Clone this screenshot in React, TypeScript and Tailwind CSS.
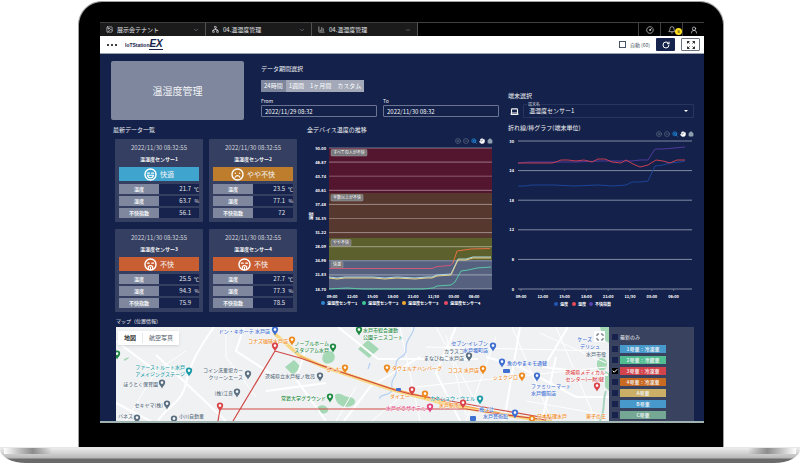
import React from 'react';
import {
  Bell,
  ChartColumn,
  Check,
  ChevronDown,
  CircleGauge,
  CircleMinus,
  CirclePlus,
  Hand,
  House,
  Image,
  Laptop,
  Maximize,
  Network,
  RotateCw,
  UserRound,
  ZoomIn,
} from 'lucide-react';

const TABS = [
  { label: '展示会テナント', Icon: Image },
  { label: '04.温湿度管理', Icon: Network },
  { label: '04.温湿度管理', Icon: ChartColumn },
];

type Mood = 'good' | 'fair' | 'bad';

interface Sensor {
  name: string;
  time: string;
  mood: Mood;
  temp: string;
  humidity: string;
  index: string;
}

const SENSORS: Sensor[] = [
  { name: '温湿度センサー1', time: '2022/11/30 08:32:55', mood: 'good', temp: '21.7', humidity: '63.7', index: '56.1' },
  { name: '温湿度センサー2', time: '2022/11/30 08:32:55', mood: 'fair', temp: '23.5', humidity: '77.1', index: '72' },
  { name: '温湿度センサー3', time: '2022/11/30 08:32:55', mood: 'bad', temp: '25.5', humidity: '94.3', index: '75.9' },
  { name: '温湿度センサー4', time: '2022/11/30 08:32:55', mood: 'bad', temp: '27.7', humidity: '77.3', index: '78.5' },
];

const MOODS = {
  good: { label: '快適', bg: 'bg-[#3fa5cf]' },
  fair: { label: 'やや不快', bg: 'bg-[#bd7d2c]' },
  bad: { label: '不快', bg: 'bg-[#c95e33]' },
};

const HOURS = ['09:00', '12:00', '15:00', '18:00', '21:00', '11/30', '03:00', '06:00'];

function Face({ mood }: { mood: Mood }) {
  return (
    <svg viewBox="0 0 24 24" className="w-[13px] h-[13px] shrink-0" fill="none" stroke="white" strokeWidth="2.6" strokeLinecap="round">
      <circle cx="12" cy="12" r="10.2" />
      {mood === 'good' && (
        <>
          <path d="M6.5 9.5h3.5M14 9.5h3.5" />
          <path d="M6.5 13.5h11c-.6 3-2.8 4.5-5.5 4.5s-4.9-1.5-5.5-4.5z" strokeWidth="2" />
        </>
      )}
      {mood === 'fair' && (
        <>
          <path d="M8 9.5v.3M16 9.5v.3" />
          <path d="M7.5 17c1.2-2 2.7-3 4.5-3s3.3 1 4.5 3" strokeWidth="2" />
        </>
      )}
      {mood === 'bad' && (
        <>
          <path d="M6.500 9.500h3M14.500 9.500h3" />
          <path d="M8 20v-4c2.300-2.500 5.700-2.500 8 0v4" strokeWidth="2.200" />
          <path d="M12 17v4" strokeWidth="2" />
        </>
      )}
    </svg>
  );
}

function TopTabs() {
  return (
    <nav className="flex h-3.5 bg-black text-[6px] leading-[8px] text-gray-200 border-t border-neutral-700">
      {TABS.map(({ label, Icon }, i) => (
        <button key={i} type="button" className="w-[106px] flex items-center gap-1 px-1.5 bg-[#1b1b1c] border-r border-neutral-600">
          <Icon className="w-[7px] h-[7px]" />
          <span>{label}</span>
          <ChevronDown className="w-[6px] h-[6px] ml-auto text-gray-400" />
        </button>
      ))}
      <div className="ml-auto flex">
        <button type="button" aria-label="status" className="w-[22px] flex items-center justify-center border-l border-neutral-700">
          <CircleGauge className="w-2 h-2" />
        </button>
        <button type="button" aria-label="notifications" className="relative w-[22px] flex items-center justify-center border-l border-neutral-700">
          <Bell className="w-2 h-2" />
          <span className="absolute right-0 bottom-px w-[7px] h-[7px] rounded-full bg-yellow-300 text-[4px] leading-[7px] text-black text-center">6</span>
        </button>
        <button type="button" aria-label="account" className="w-[22px] flex items-center justify-center border-l border-neutral-700">
          <UserRound className="w-2 h-2" />
        </button>
      </div>
    </nav>
  );
}

function Header() {
  return (
    <header className="flex items-center h-[18px] pl-[7px] pr-1 bg-white border-b border-gray-400 text-[#17224b]">
      <button type="button" aria-label="menu" className="flex gap-[2px]">
        <span className="w-[2px] h-[2px] rounded-full bg-black" />
        <span className="w-[2px] h-[2px] rounded-full bg-black" />
        <span className="w-[2px] h-[2px] rounded-full bg-black" />
      </button>
      <a href="#" className="ml-2 flex items-center font-['Liberation_Sans',sans-serif]">
        <span className="text-[5px] leading-[8px] font-bold">IoTStation</span>
        <span className="text-[10px] leading-[10px] font-black italic border-b border-[#17224b]">EX</span>
      </a>
      <label className="ml-auto flex items-center gap-1 text-[5px] leading-[8px] text-gray-600">
        <input type="checkbox" className="appearance-none w-[7px] h-[7px] border border-gray-600" />
        自動 (60)
      </label>
      <button type="button" aria-label="refresh" className="ml-1.5 w-[19px] h-[13px] rounded-[1px] bg-[#17244d] text-white flex items-center justify-center">
        <RotateCw className="w-2 h-2" strokeWidth={3} />
      </button>
      <button type="button" aria-label="fullscreen" className="ml-1.5 w-[19px] h-[13px] rounded-[1px] border border-gray-500 text-black flex items-center justify-center">
        <svg viewBox="0 0 16 16" className="w-2 h-2" fill="none" stroke="currentColor" strokeWidth="1.6">
          <path d="M1 5V1h4M1 1l4 4M11 1h4v4M15 1l-4 4M1 11v4h4M1 15l4-4M15 11v4h-4M15 15l-4-4" />
        </svg>
      </button>
    </header>
  );
}

function Range() {
  return (
    <section className="flex-1 flex flex-col pt-1">
      <h2 className="text-[6px] leading-[8px]">データ期間選択</h2>
      <div className="mt-[7px] flex self-start h-3 bg-[#a3a9b8] text-[6px] leading-[8px] text-white">
        <button type="button" className="px-[3px] bg-[#7d869c]">24時間</button>
        <button type="button" className="px-[3px]">1週間</button>
        <button type="button" className="px-[3px]">1ヶ月間</button>
        <button type="button" className="px-[3px]">カスタム</button>
      </div>
      <div className="mt-[5px] grid grid-cols-2 gap-1.5 text-[6px]">
        <label className="flex flex-col text-[5px] leading-[8px]">
          From
          <input type="text" defaultValue="2022/11/29 08:32" className="w-full h-3 px-[3px] border border-[#6b7490] rounded-[1px] text-[6px]" />
        </label>
        <label className="flex flex-col text-[5px] leading-[8px]">
          To
          <input type="text" defaultValue="2022/11/30 08:32" className="w-full h-3 px-[3px] border border-[#6b7490] rounded-[1px] text-[6px]" />
        </label>
      </div>
    </section>
  );
}

function SensorCard({ sensor }: { sensor: Sensor }) {
  const mood = MOODS[sensor.mood];
  const rows = [
    ['温度', sensor.temp, '℃'],
    ['湿度', sensor.humidity, '%'],
    ['不快指数', sensor.index, ''],
  ];
  return (
    <article className="bg-[#353f61] rounded-[1px] px-1 pt-[5px] pb-[2px] text-[6px] leading-[8px]">
      <p className="text-center text-gray-300">{sensor.time}</p>
      <h3 className="mt-[3px] text-center text-[5px] leading-[8px] font-bold">{sensor.name}</h3>
      <div className={`mt-1 h-3.5 flex items-center justify-center gap-[3px] text-[7px] ${mood.bg}`}>
        <Face mood={sensor.mood} />
        {mood.label}
      </div>
      <table className="w-full mt-px table-fixed border-separate border-spacing-x-0 border-spacing-y-[2px] text-[5px] leading-[10px]">
        <tbody>
          {rows.map(([label, value, unit]) => (
            <tr key={label}>
              <th className="p-0 w-1/2 bg-[#7e879d] font-bold">{label}</th>
              <td className="p-0 bg-[#17234c] text-right text-[6px] text-gray-200">{value}</td>
              <td className="p-0 w-2 bg-[#17234c] text-right text-gray-200">{unit}</td>
            </tr>
          ))}
        </tbody>
      </table>
    </article>
  );
}

function ChartTools({ className = '' }: { className?: string }) {
  return (
    <div className={`flex justify-end items-center gap-[2px] h-2 ${className}`}>
      <button type="button" aria-label="zoom in"><CirclePlus className="w-[6px] h-[6px] text-[#6e8192]" /></button>
      <button type="button" aria-label="zoom out"><CircleMinus className="w-[6px] h-[6px] text-[#6e8192]" /></button>
      <button type="button" aria-label="select"><ZoomIn className="w-[6px] h-[6px] text-[#1f8fe0]" strokeWidth={3} /></button>
      <button type="button" aria-label="pan"><Hand className="w-[6px] h-[6px] text-white fill-white" strokeWidth={2} /></button>
      <button type="button" aria-label="reset"><House className="w-[6px] h-[6px] text-[#8ea0b0] fill-[#8ea0b0]" strokeWidth={1} /></button>
    </div>
  );
}

const BANDS = [
  { y: 14, h: 45, fill: '#54152f', label: 'すべての人が不快', w: 36 },
  { y: 59, h: 45, fill: '#57382f', label: '半数以上が不快', w: 32 },
  { y: 104, h: 22, fill: '#5c602d', label: 'やや不快', w: 20 },
  { y: 126, h: 29, fill: '#55617f', label: '快適', w: 12 },
];

const LEVELS = ['50.00', '46.87', '43.74', '40.61', '37.48', '34.35', '31.22', '28.09', '24.96', '21.83', '18.70'];

function AllDevicesChart() {
  const legend = [
    [20, '#2f86d1', '温湿度センサー1'],
    [61, '#3fc795', '温湿度センサー2'],
    [101, '#f0a92e', '温湿度センサー3'],
    [143, '#e94b62', '温湿度センサー4'],
  ] as const;
  return (
    <svg viewBox="0 11 196 167" className="w-full block" fontSize="4" fill="white">
      {BANDS.map((b) => (
        <rect key={b.label} x="26" y={b.y} width="163" height={b.h} fill={b.fill} />
      ))}
      {LEVELS.map((v, i) => (
        <g key={v}>
          <line x1="26" x2="189" y1={14 + i * 14.1} y2={14 + i * 14.1} stroke="white" strokeOpacity={i % 3 === 2 ? 0.3 : 0.42} strokeWidth="1" />
          <text x="23" y={15.5 + i * 14.1} textAnchor="end" fontWeight="600">{v}</text>
        </g>
      ))}
      {BANDS.map((b) => (
        <g key={b.label}>
          <rect x="28" y={b.y + 1.5} width={b.w} height="6.5" rx="1" fill="#77777b" stroke="#b5b5b5" strokeWidth=".4" />
          <text x={28 + b.w / 2} y={b.y + 6.3} textAnchor="middle">{b.label}</text>
        </g>
      ))}
      <text x="8" y="84" textAnchor="middle" fontWeight="700" transform="rotate(-90 8 82)">温度</text>
      <g fill="none" strokeWidth="1" strokeLinejoin="round">
        <polyline stroke="#d0587a" points="26,134.5 50,134.5 80,134.5 129,134.5 134,132.5 147,131.5 150,129" />
        <polyline stroke="#e3703f" points="150,129 154,117 161,116 168,115 187,114.5" />
        <polyline stroke="#a9d8f0" points="26,143 34,144 42,143 70,143 82,144 94,143 112,144 124,143 129,143 134,141 148,140 155,125 163,125 170,123 188,123" />
        <polyline stroke="#e5cf82" points="26,144 34,145 42,144 70,144 82,145 94,144 112,145 124,144 129,144 134,142 148,141 155,126 163,126 170,124 188,124" />
        <polyline stroke="#58c9a6" points="26,155 44,154 60,155 120,155 130,154 134,152 148,151 152,148 158,137 165,136 174,134 188,133" />
      </g>
      {HOURS.map((h, i) => (
        <text key={h} x={29 + i * 20.3} y="163.5" textAnchor="middle" fontWeight="600">{h}</text>
      ))}
      {legend.map(([x, color, label]) => (
        <g key={label}>
          <circle cx={x} cy="169" r="2" fill={color} />
          <text x={x + 4} y="170.5" fontWeight="600">{label}</text>
        </g>
      ))}
    </svg>
  );
}

function DeviceChart() {
  const legend = [
    [48, '#2157b5', '温度'],
    [66, '#ea4a52', '湿度'],
    [83, '#5a3fae', '不快指数'],
  ] as const;
  return (
    <svg viewBox="0 6 186 174" className="w-full block" fontSize="4" fill="white">
      {['30', '24', '18', '12', '6', '0'].map((v, i) => (
        <g key={v}>
          <line x1="10" x2="184" y1={9 + i * 29.6} y2={9 + i * 29.6} stroke="#808aa3" strokeWidth="1" />
          <text x="6" y={10.5 + i * 29.6} textAnchor="end" fontWeight="600">{v}</text>
        </g>
      ))}
      <g fill="none" strokeWidth="1" strokeLinejoin="round">
        <polyline stroke="#1c4596" points="10,54 17,54 24,53 46,53 66,54 90,53 105,54 118,53 124,50 132,50 140,49 147,34 155,33 162,31 172,30 177,29" />
        <polyline stroke="#51399c" points="10,31 20,30 50,30 67,30 92,29 124,29 132,28 140,28 147,17 155,17 166,16 177,15" />
        <polyline stroke="#c83f55" points="10,31 34,31 44,31 48,30 53,28 60,28 68,29 76,28 84,30 90,27 97,27 104,30 113,31 118,28 125,32 132,35 140,33 148,28 155,29 162,31 169,28 177,28" />
      </g>
      {HOURS.map((h, i) => (
        <g key={h}>
          <line x1={13 + i * 21.8} x2={13 + i * 21.8} y1="157" y2="159" stroke="#808aa3" strokeWidth=".6" />
          <text x={13 + i * 21.8} y="166" textAnchor="middle" fontWeight="600">{h}</text>
        </g>
      ))}
      {legend.map(([x, color, label]) => (
        <g key={label}>
          <circle cx={x} cy="172" r="2" fill={color} />
          <text x={x + 4} y="173.5" fontWeight="600">{label}</text>
        </g>
      ))}
    </svg>
  );
}

const BLUE = '#3f6fd0';
const ORANGE = '#ee8a1d';
const GREEN = '#1f8a44';
const TEAL = '#1a9aa5';
const SLATE = '#5b6f80';
const PINK = '#e0457e';
const RED = '#d9454a';

// x, y of the pin head
const PINS: [number, number, string][] = [
  [159, 3, BLUE], [176, 13, ORANGE], [159, 19, RED], [217, 20, GREEN], [243, 3, GREEN],
  [73, 44, TEAL], [46, 56, SLATE], [51, 77, SLATE], [21, 91, SLATE], [58, 92, SLATE],
  [132, 47, SLATE], [121, 65, SLATE], [104, 79, RED], [204, 49, SLATE], [229, 41, ORANGE],
  [271, 41, ORANGE], [214, 70, GREEN], [296, 63, RED], [309, 67, ORANGE], [314, 80, PINK],
  [353, 29, SLATE], [377, 19, BLUE], [367, 42, ORANGE], [364, 72, TEAL], [347, 76, RED],
  [386, 35, BLUE], [406, 49, ORANGE], [421, 49, BLUE], [481, 59, RED], [399, 86, BLUE],
  [416, 92, ORANGE], [1, 27, GREEN],
];

// x, baseline, text, colour, anchor
const PLACES: [number, number, string, string, 'start' | 'end'][] = [
  [154, 6, 'ドン・キホーテ 水戸店', BLUE, 'end'],
  [172, 16, 'コナズ珈琲水戸店', ORANGE, 'end'],
  [213, 18, 'ノーブルホーム', GREEN, 'end'],
  [213, 25, 'スタジアム水戸', GREEN, 'end'],
  [247, 5, '水戸市総合運動', GREEN, 'start'],
  [247, 12, '公園テニスコート', GREEN, 'start'],
  [69, 42, 'ファーストルート水戸', TEAL, 'end'],
  [69, 49, 'アメイジングステージ', TEAL, 'end'],
  [42, 59, 'ほうとく保育園', SLATE, 'end'],
  [47, 80, 'セキヤマ(株)', SLATE, 'end'],
  [17, 91, 'バネス', SLATE, 'end'],
  [63, 91, '小川自動車', SLATE, 'start'],
  [127, 45, 'コイン洗車場カー', SLATE, 'end'],
  [127, 52, 'クリーンエース', SLATE, 'end'],
  [117, 68, '(株)江良', SLATE, 'end'],
  [199, 51, '茨城県立水戸桜ノ牧高', SLATE, 'end'],
  [210, 73, '常磐大学グラウンド', GREEN, 'end'],
  [225, 44, 'らーむ', ORANGE, 'end'],
  [276, 43, 'タヴェルナハンバーグ', ORANGE, 'start'],
  [294, 71, 'ダイエー', ORANGE, 'end'],
  [310, 83, '水戸プラザホテル', PINK, 'end'],
  [348, 26, 'カラスコ', SLATE, 'end'],
  [348, 33, 'まなびねこ水戸店', SLATE, 'end'],
  [372, 18, 'セブン-イレブン', BLUE, 'end'],
  [372, 25, '水戸堀町店', BLUE, 'end'],
  [363, 45, 'ココス 水戸店', ORANGE, 'end'],
  [359, 73, 'カネショウ・ウェル', TEAL, 'end'],
  [343, 80, '水戸駅南', ORANGE, 'end'],
  [363, 84, '梅ノ辻', BLUE, 'start'],
  [367, 91, '水戸芸術館', BLUE, 'start'],
  [391, 38, '魚のやまキモ通健', BLUE, 'start'],
  [402, 52, 'シェクジロ', ORANGE, 'end'],
  [415, 61, 'ファミリーマート', BLUE, 'start'],
  [415, 68, '水戸備前店', BLUE, 'start'],
  [489, 47, '茨城県メディカル', RED, 'end'],
  [488, 54, 'センター(一財)健', RED, 'end'],
  [476, 14, 'ケーズ', BLUE, 'end'],
  [484, 21, 'デリシュ', BLUE, 'end'],
  [490, 29, '水戸市役', SLATE, 'end'],
  [490, 91, '菓子の王', ORANGE, 'end'],
  [421, 91, '日本料理水戸', ORANGE, 'start'],
];

function MapView() {
  return (
    <div className="relative flex-1 min-w-0 overflow-hidden bg-[#eff1f3]">
      <svg viewBox="0 0 493 94" preserveAspectRatio="xMidYMid slice" className="w-full h-[94px] block" fontSize="5">
        <g fill="#a5d8b5">
          <path d="M169 40l9-7 7 7-8 8zM242 22l10-9 11 9-10 9z" />
          <path d="M212 24c6 0 8 5 6 9s-9 5-11 1 1-10 5-10zM200 82c4-6 10-4 12 0s-8 8-12 0zM219 68c5-4 9 2 14 2s10 6 2 9-16-2-16-11z" />
          <path d="M484 0h9v16l-6-4zM485 31c6 0 7 6 5 10s-9 3-9-3 2-7 4-7zM489 44l4 2v18l-4-4z" />
          <path d="M8 32l5-2-1 2-4 2z" />
        </g>
        <path d="M0 76L42 98M98 0C84 20 74 36 70 56S50 80 42 94M40 28l70 66M128 0l-8 24 40 26M228 94l26-34 50-30M222 0l40 32h90M340 0l-20 46 24 48M404 0l-16 94M440 30l-14 64M452 0l-24 40 64 8M300 32h62M370 30l34 10 56 30h34M190 22l-10 30 30 42M150 64l60-8M0 14l40 30" fill="none" stroke="#fff" strokeWidth="2" />
        <path d="M10 94l30-50 30-20M110 0v30l30 40M284 0l20 94M320 0l50 94M396 0l40 94M440 0l40 94M300 60l190-20M310 20l180 4M330 8l20 80M380 10l-30 84M410 74l80 14M424 6l66 30M240 60l-20 34M256 94l40-34" fill="none" stroke="#fff" strokeWidth="1" />
        <path d="M298 0c0 8-9 12-8 22s-12 6-10 18-6 10-4 20-14 6-12 12M254 36l-2 6" fill="none" stroke="#b5d0f4" strokeWidth="1.2" />
        <path d="M490 64c-4 10 0 18-6 30" fill="none" stroke="#a8d4bf" strokeWidth="2" />
        <path d="M158 6l26 23 22 10 68 23 60 16 50 9 52 8" fill="none" stroke="#f9d783" strokeWidth="3.5" />
        <path d="M184 29l22 10 68 22 60 15 50 10" fill="none" stroke="#f0a04e" strokeWidth="1" />
        <path d="M159 24l25 7 35 12 60 20 15 4 40 7 50 9 52 9M159 24l-42 70M102 94l2-12h246l34 5 46 6" fill="none" stroke="#cf4a46" strokeWidth="1.2" />
        {PLACES.map(([x, y, label, color, anchor]) => (
          <text key={label} x={x} y={y} fill={color} textAnchor={anchor} fontWeight="500" stroke="#fff" strokeWidth=".6" paintOrder="stroke">{label}</text>
        ))}
        {PINS.map(([x, y, color]) => (
          <g key={`${x}-${y}`} transform={`translate(${x} ${y})`}>
            <path d="M0 5.5C-1 3-3.2 2-3.2-.4a3.2 3.2 0 0 1 6.4 0C3.2 2 1 3 0 5.5z" fill={color} />
            <circle r="1.3" cy="-.4" fill="#fff" />
          </g>
        ))}
        <g fill={BLUE}>
          <rect x="280" y="61" width="5" height="3" rx="1" />
          <rect x="387" y="42" width="7" height="4" rx="1" />
          <rect x="354" y="89" width="6" height="5" rx="1" />
        </g>
      </svg>
      <div className="absolute left-[2px] top-1 flex h-3.5 bg-white text-[6px] leading-[8px] shadow-sm">
        <button type="button" className="px-1.5 font-medium text-black">地図</button>
        <button type="button" className="my-[2px] pl-1.5 pr-1.5 border-l border-gray-200 text-gray-600">航空写真</button>
      </div>
      <button type="button" aria-label="expand map" className="absolute right-1 top-1 w-[11px] h-[11px] bg-white text-gray-600 flex items-center justify-center">
        <Maximize className="w-2 h-2" strokeWidth={3} />
      </button>
    </div>
  );
}

const VEHICLES = [
  { label: '1号車：冷凍車', bg: 'bg-[#4799cb]' },
  { label: '2号車：冷蔵車', bg: 'bg-[#51bd91]' },
  { label: '3号車：冷凍車', bg: 'bg-[#d4434b]', checked: true },
  { label: '4号車：冷凍車', bg: 'bg-[#c86a22]' },
  { label: 'A号車', bg: 'bg-[#c9b066]' },
  { label: 'B号車', bg: 'bg-[#4799cb]' },
  { label: 'C号車', bg: 'bg-[#74a894]' },
];

function VehicleCheck({ checked = false }: { checked?: boolean }) {
  return (
    <span className="grid">
      <input type="checkbox" defaultChecked={checked} className="peer appearance-none col-start-1 row-start-1 w-1.5 h-1.5 bg-[#17234c] checked:bg-black" />
      <Check className="hidden peer-checked:block pointer-events-none col-start-1 row-start-1 w-1.5 h-1.5 text-white" strokeWidth={4} />
    </span>
  );
}

function VehicleList() {
  return (
    <aside className="w-[85px] h-[94px] shrink-0 overflow-hidden bg-[#39425f] pl-[3px] pt-1.5 flex flex-col gap-[3px] text-[5px] leading-[8px]">
      <label className="flex items-center gap-[2px] mb-px">
        <VehicleCheck />
        最新のみ
      </label>
      {VEHICLES.map((v) => (
        <label key={v.label} className="flex items-center gap-[2px]">
          <VehicleCheck checked={v.checked} />
          <span className={`w-[46px] h-2 text-center font-medium ${v.bg}`}>{v.label}</span>
        </label>
      ))}
    </aside>
  );
}

function Dashboard() {
  return (
    <main className="bg-[#14214a] text-gray-100 pl-[11px] pr-2.5 pt-[7px]">
      <div className="grid grid-cols-[388fr_186fr] gap-[9px]">
        <div className="min-w-0">
          <div className="flex gap-[17px]">
            <h1 className="w-[133px] h-[59px] rounded-[2px] bg-[#7e879d] flex items-center justify-center text-[10px]">温湿度管理</h1>
            <Range />
          </div>
          <div className="mt-1.5 grid grid-cols-[186fr_196fr] gap-1.5">
            <section className="min-w-0">
              <h2 className="pl-[2px] text-[6px] leading-[8px]">最新データ一覧</h2>
              <div className="mt-[5px] ml-1 grid grid-cols-2 gap-x-1.5 gap-y-[7px]">
                {SENSORS.map((s) => (
                  <SensorCard key={s.name} sensor={s} />
                ))}
              </div>
            </section>
            <section className="min-w-0">
              <h2 className="pl-1 text-[6px] leading-[8px]">全デバイス温度の推移</h2>
              <ChartTools className="mt-[3px] pr-1.5" />
              <AllDevicesChart />
            </section>
          </div>
        </div>
        <div className="min-w-0 pt-[31px]">
          <h2 className="text-[6px] leading-[8px]">端末選択</h2>
          <div className="mt-1 flex items-center gap-1">
            <Laptop className="w-[9px] h-[9px] ml-[2px]" strokeWidth={3} />
            <div className="relative flex-1">
              <label htmlFor="device" className="absolute left-1 -top-1 px-px bg-[#14214a] text-[4px] leading-[8px] text-gray-300">端末名</label>
              <select id="device" className="appearance-none block w-full h-3.5 pl-[5px] text-[6px] leading-[8px] border border-[#28365f] rounded-[1px]">
                <option>温湿度センサー1</option>
                <option>温湿度センサー2</option>
              </select>
              <span className="pointer-events-none absolute right-1.5 top-1.5 border-x-2 border-t-2 border-x-transparent border-t-white" />
            </div>
          </div>
          <h2 className="mt-1.5 text-[6px] leading-[8px]">折れ線/棒グラフ(端末単位)</h2>
          <ChartTools className="-mt-[2px]" />
          <DeviceChart />
        </div>
      </div>
      <section className="pl-[5px] mt-[5px]">
        <h2 className="text-[5px] leading-[8px]">マップ（位置情報）</h2>
        <div className="mt-[2px] flex">
          <MapView />
          <VehicleList />
        </div>
      </section>
    </main>
  );
}

export default function App() {
  return (
    <div className="bg-white font-['Noto_Sans_CJK_JP',sans-serif] overflow-hidden">
      <div className="mt-px ml-[78px] mr-[76px] pl-[21px] pr-[19px] pt-5 pb-6 bg-black border border-b-0 border-neutral-400 rounded-t-[24px]">
        <TopTabs />
        <Header />
        <Dashboard />
        <div className="h-[2px] bg-[#9fb3b1]" />
      </div>
      <div className="flex justify-between h-4 rounded-b-[26px_14px] bg-linear-to-b from-[#ececec] from-0% via-[#b9b9b9] via-65% to-[#6a6a6a] to-75% border-t border-gray-200">
        <span className="w-12 h-1.5 ml-1 bg-linear-to-r from-white via-[#8d8d8d] via-60% to-transparent" />
        <span className="w-12 h-1.5 mr-1 bg-linear-to-l from-white via-[#8d8d8d] via-60% to-transparent" />
      </div>
    </div>
  );
}
